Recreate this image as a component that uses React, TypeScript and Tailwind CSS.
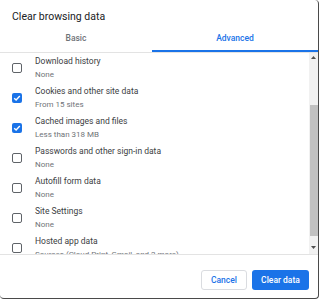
const items = [
  { label: "Download history", sub: "None", checked: false },
  { label: "Cookies and other site data", sub: "From 15 sites", checked: true },
  { label: "Cached images and files", sub: "Less than 318 MB", checked: true },
  { label: "Passwords and other sign-in data", sub: "None", checked: false },
  { label: "Autofill form data", sub: "None", checked: false },
  { label: "Site Settings", sub: "None", checked: false },
  { label: "Hosted app data", sub: "Sources (Cloud Print, Gmail, and 2 more)", checked: false },
];

function Checkbox({ checked }: { checked: boolean }) {
  if (checked) {
    return (
      <span className="w-[10px] h-[10px] rounded-[2px] bg-[#1a73e8] flex items-center justify-center">
        <svg width="8" height="8" viewBox="0 0 8 8" fill="none" aria-hidden="true">
          <path d="M1.2 4.2 L3.1 6 L6.8 2" stroke="#fff" strokeWidth="1.4" />
        </svg>
      </span>
    );
  }
  return <span className="w-[10px] h-[10px] rounded-[2px] border-[1.5px] border-[#5f6368] bg-white" />;
}

export default function App() {
  return (
    <div className="w-[320px] h-[301px] bg-white overflow-hidden" style={{ fontFamily: "Roboto, Arial, sans-serif" }}>
      <div className="w-[319px] h-[299px] bg-white rounded-[4px] border-r border-b border-[#4a4a4a] flex flex-col overflow-hidden">
        <div className="h-[27px] pt-[8px] pl-[12px] text-[10.5px] leading-[18px] text-[#202124]">
          Clear browsing data
        </div>

        <div className="h-[26px] flex border-b border-[#e3e3e3]">
          <div className="w-[152px] flex items-center justify-center border-b-2 border-transparent text-[8.5px] font-medium text-[#6f7378]">
            Basic
          </div>
          <div className="flex-1 flex items-center justify-center border-b-2 border-[#1a73e8] text-[8.5px] font-medium text-[#1a73e8]">
            Advanced
          </div>
        </div>

        <div className="h-[201px] flex">
          <div className="flex-1 overflow-hidden">
            {items.map((item) => (
              <div key={item.label} className="h-[30px] flex items-center shrink-0">
                <div className="w-[35px] pl-[12px] flex items-center">
                  <Checkbox checked={item.checked} />
                </div>
                <div className="flex flex-col">
                  <span className="text-[8.5px] leading-[13px] text-[#3c4043] whitespace-nowrap">{item.label}</span>
                  <span className="text-[8px] leading-[13px] text-[#6f7378] whitespace-nowrap">{item.sub}</span>
                </div>
              </div>
            ))}
          </div>
          <div className="w-[9px] bg-[#f1f1f1] flex flex-col items-center">
            <div className="h-[9px] flex items-center justify-center">
              <svg width="5" height="3" viewBox="0 0 5 3" aria-hidden="true">
                <path d="M0 3 L2.5 0 L5 3 Z" fill="#505050" />
              </svg>
            </div>
            <div className="h-[43px]" />
            <div className="w-[8px] h-[131px] bg-[#c1c1c1]" />
            <div className="flex-1" />
            <div className="h-[9px] mb-[2px] flex items-center justify-center">
              <svg width="5" height="3" viewBox="0 0 5 3" aria-hidden="true">
                <path d="M0 0 L5 0 L2.5 3 Z" fill="#505050" />
              </svg>
            </div>
          </div>
        </div>

        <div className="flex-1 border-t border-[#e3e3e3] flex justify-end items-start pt-[15px] pr-[9px] gap-[5px]">
          <button
            type="button"
            className="w-[46px] h-[20px] rounded-[3px] border border-[#dadce0] bg-white text-[8.5px] font-medium text-[#1a73e8]"
          >
            Cancel
          </button>
          <button
            type="button"
            className="w-[57px] h-[20px] rounded-[3px] bg-[#1a73e8] text-[8.5px] font-medium text-white"
          >
            Clear data
          </button>
        </div>
      </div>
    </div>
  );
}
